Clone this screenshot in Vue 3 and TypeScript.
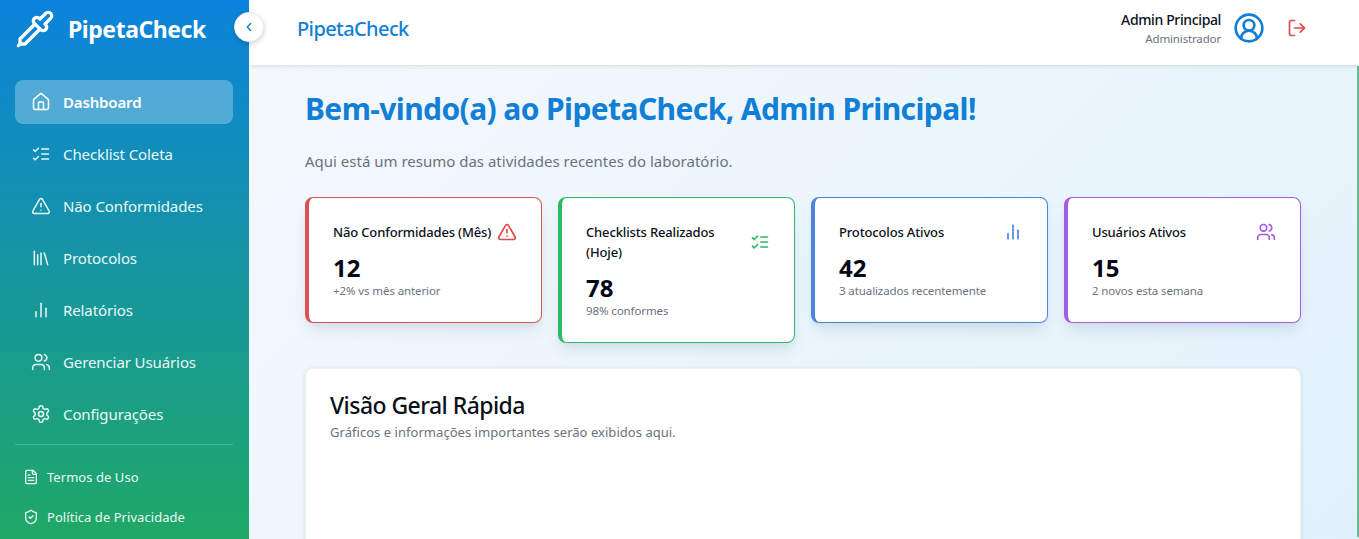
<template>
  <div class="layout">
    <aside class="sidebar">
      <div class="brand">
        <svg class="brand-icon" viewBox="0 0 24 24" fill="none" stroke="currentColor" stroke-width="2" stroke-linecap="round" stroke-linejoin="round">
          <path d="m2 22 1-1h3l9-9" />
          <path d="M3 21v-3l9-9" />
          <path d="m15 6 3.4-3.4a2.1 2.1 0 1 1 3 3L18 9l.4.4a2.1 2.1 0 1 1-3 3l-3.8-3.8a2.1 2.1 0 1 1 3-3l.4.4Z" />
        </svg>
        <span class="brand-name">PipetaCheck</span>
      </div>
      <button class="collapse" type="button" aria-label="Recolher">
        <svg viewBox="0 0 24 24" fill="none" stroke="currentColor" stroke-width="2.4" stroke-linecap="round" stroke-linejoin="round"><path d="m15 18-6-6 6-6" /></svg>
      </button>

      <nav class="nav">
        <a v-for="item in navItems" :key="item.label" class="nav-item" :class="{ active: item.active }">
          <svg class="nav-icon" viewBox="0 0 24 24" fill="none" stroke="currentColor" stroke-width="2" stroke-linecap="round" stroke-linejoin="round">
            <path v-for="d in icons[item.icon]" :key="d" :d="d" />
          </svg>
          <span>{{ item.label }}</span>
        </a>
      </nav>

      <div class="legal">
        <a v-for="item in legalItems" :key="item.label" class="legal-item">
          <svg class="legal-icon" viewBox="0 0 24 24" fill="none" stroke="currentColor" stroke-width="2" stroke-linecap="round" stroke-linejoin="round">
            <path v-for="d in icons[item.icon]" :key="d" :d="d" />
          </svg>
          <span>{{ item.label }}</span>
        </a>
      </div>
    </aside>

    <div class="content">
      <header class="topbar">
        <span class="topbar-title">PipetaCheck</span>
        <div class="user">
          <div class="user-text">
            <span class="user-name">Admin Principal</span>
            <span class="user-role">Administrador</span>
          </div>
          <svg class="user-icon" viewBox="0 0 24 24" fill="none" stroke="currentColor" stroke-width="2" stroke-linecap="round" stroke-linejoin="round">
            <path d="M18 20a6 6 0 0 0-12 0" />
            <circle cx="12" cy="10" r="4" />
            <circle cx="12" cy="12" r="10" />
          </svg>
          <svg class="logout-icon" viewBox="0 0 24 24" fill="none" stroke="currentColor" stroke-width="2" stroke-linecap="round" stroke-linejoin="round">
            <path d="M9 21H5a2 2 0 0 1-2-2V5a2 2 0 0 1 2-2h4" />
            <path d="m16 17 5-5-5-5" />
            <path d="M21 12H9" />
          </svg>
        </div>
      </header>

      <main class="main">
        <h1 class="welcome">Bem-vindo(a) ao PipetaCheck, Admin Principal!</h1>
        <p class="intro">Aqui está um resumo das atividades recentes do laboratório.</p>

        <section class="cards">
          <article v-for="card in cards" :key="card.title" class="card" :class="card.tone">
            <div class="card-head">
              <h2 class="card-title">{{ card.title }}</h2>
              <svg class="card-icon" viewBox="0 0 24 24" fill="none" stroke="currentColor" stroke-width="2" stroke-linecap="round" stroke-linejoin="round">
                <path v-for="d in icons[card.icon]" :key="d" :d="d" />
              </svg>
            </div>
            <div class="card-value">{{ card.value }}</div>
            <div class="card-note">{{ card.note }}</div>
          </article>
        </section>

        <section class="overview">
          <h2 class="overview-title">Visão Geral Rápida</h2>
          <p class="overview-text">Gráficos e informações importantes serão exibidos aqui.</p>
        </section>

        <div class="scroll-thumb"></div>
      </main>
    </div>
  </div>
</template>

<script setup lang="ts">
type IconName = 'home' | 'list' | 'alert' | 'library' | 'chart' | 'users' | 'gear' | 'file' | 'shield'

const icons: Record<IconName, string[]> = {
  home: [
    'M15 21v-8a1 1 0 0 0-1-1h-4a1 1 0 0 0-1 1v8',
    'M3 10a2 2 0 0 1 .709-1.528l7-5.999a2 2 0 0 1 2.582 0l7 5.999A2 2 0 0 1 21 10v9a2 2 0 0 1-2 2H5a2 2 0 0 1-2-2z'
  ],
  list: ['m3 17 2 2 4-4', 'm3 7 2 2 4-4', 'M13 6h8', 'M13 12h8', 'M13 18h8'],
  alert: [
    'm21.73 18-8-14a2 2 0 0 0-3.48 0l-8 14A2 2 0 0 0 4 21h16a2 2 0 0 0 1.73-3',
    'M12 9v4',
    'M12 17h.01'
  ],
  library: ['m16 6 4 14', 'M12 6v14', 'M8 8v12', 'M4 4v16'],
  chart: ['M18 20V10', 'M12 20V4', 'M6 20v-6'],
  users: [
    'M16 21v-2a4 4 0 0 0-4-4H6a4 4 0 0 0-4 4v2',
    'M9 3a4 4 0 1 0 0 8 4 4 0 0 0 0-8',
    'M22 21v-2a4 4 0 0 0-3-3.87',
    'M16 3.13a4 4 0 0 1 0 7.75'
  ],
  gear: [
    'M12.22 2h-.44a2 2 0 0 0-2 2v.18a2 2 0 0 1-1 1.73l-.43.25a2 2 0 0 1-2 0l-.15-.08a2 2 0 0 0-2.73.73l-.22.38a2 2 0 0 0 .73 2.73l.15.1a2 2 0 0 1 1 1.72v.51a2 2 0 0 1-1 1.74l-.15.09a2 2 0 0 0-.73 2.73l.22.38a2 2 0 0 0 2.73.73l.15-.08a2 2 0 0 1 2 0l.43.25a2 2 0 0 1 1 1.73V20a2 2 0 0 0 2 2h.44a2 2 0 0 0 2-2v-.18a2 2 0 0 1 1-1.73l.43-.25a2 2 0 0 1 2 0l.15.08a2 2 0 0 0 2.73-.73l.22-.39a2 2 0 0 0-.73-2.73l-.15-.08a2 2 0 0 1-1-1.74v-.5a2 2 0 0 1 1-1.74l.15-.09a2 2 0 0 0 .73-2.73l-.22-.38a2 2 0 0 0-2.73-.73l-.15.08a2 2 0 0 1-2 0l-.43-.25a2 2 0 0 1-1-1.73V4a2 2 0 0 0-2-2z',
    'M12 9a3 3 0 1 0 0 6 3 3 0 0 0 0-6'
  ],
  file: [
    'M15 2H6a2 2 0 0 0-2 2v16a2 2 0 0 0 2 2h12a2 2 0 0 0 2-2V7Z',
    'M14 2v4a2 2 0 0 0 2 2h4',
    'M10 9H8',
    'M16 13H8',
    'M16 17H8'
  ],
  shield: [
    'M20 13c0 5-3.5 7.5-7.66 8.95a1 1 0 0 1-.67-.01C7.5 20.5 4 18 4 13V6a1 1 0 0 1 1-1c2 0 4.5-1.2 6.24-2.72a1.17 1.17 0 0 1 1.52 0C14.51 3.81 17 5 19 5a1 1 0 0 1 1 1z',
    'm9 12 2 2 4-4'
  ]
}

interface NavItem {
  label: string
  icon: IconName
  active?: boolean
}

interface Card {
  title: string
  value: string
  note: string
  icon: IconName
  tone: 'red' | 'green' | 'blue' | 'purple'
}

const navItems: NavItem[] = [
  { label: 'Dashboard', icon: 'home', active: true },
  { label: 'Checklist Coleta', icon: 'list' },
  { label: 'Não Conformidades', icon: 'alert' },
  { label: 'Protocolos', icon: 'library' },
  { label: 'Relatórios', icon: 'chart' },
  { label: 'Gerenciar Usuários', icon: 'users' },
  { label: 'Configurações', icon: 'gear' }
]

const legalItems: NavItem[] = [
  { label: 'Termos de Uso', icon: 'file' },
  { label: 'Política de Privacidade', icon: 'shield' }
]

const cards: Card[] = [
  { title: 'Não Conformidades (Mês)', value: '12', note: '+2% vs mês anterior', icon: 'alert', tone: 'red' },
  { title: 'Checklists Realizados (Hoje)', value: '78', note: '98% conformes', icon: 'list', tone: 'green' },
  { title: 'Protocolos Ativos', value: '42', note: '3 atualizados recentemente', icon: 'chart', tone: 'blue' },
  { title: 'Usuários Ativos', value: '15', note: '2 novos esta semana', icon: 'users', tone: 'purple' }
]
</script>

<style>
html,
body {
  margin: 0;
  height: 100%;
  overflow: hidden;
}
</style>

<style scoped>
.layout {
  display: flex;
  width: 1359px;
  height: 539px;
  overflow: hidden;
  font-family: "Noto Sans", "Open Sans", sans-serif;
  color: #0b0f19;
}

.sidebar {
  position: relative;
  z-index: 3;
  flex: 0 0 249px;
  box-sizing: border-box;
  height: 539px;
  padding: 0 16px 0 15px;
  background: linear-gradient(180deg, #0c83dc 0%, #20a866 100%);
  color: #fff;
}

.brand {
  display: flex;
  align-items: center;
  gap: 13px;
  height: 58px;
}

.brand-icon {
  width: 40px;
  height: 40px;
  flex: none;
}

.brand-name {
  font-size: 23px;
  font-weight: 700;
  letter-spacing: -0.45px;
}

.collapse {
  position: absolute;
  top: 12px;
  right: -15px;
  display: flex;
  align-items: center;
  justify-content: center;
  width: 30px;
  height: 30px;
  padding: 0;
  border: 1px solid #e5edf4;
  border-radius: 50%;
  background: #fff;
  box-shadow: 0 2px 5px rgba(0, 0, 0, 0.18);
  color: #127fd6;
}

.collapse svg {
  width: 14px;
  height: 14px;
}

.nav {
  display: flex;
  flex-direction: column;
  gap: 8px;
  margin-top: 22px;
}

.nav-item {
  display: flex;
  align-items: center;
  gap: 12px;
  height: 44px;
  padding: 0 16px;
  border-radius: 8px;
  font-size: 15px;
  letter-spacing: -0.1px;
  color: #e9f8f6;
}

.nav-item.active {
  background: rgba(255, 255, 255, 0.28);
  color: #fff;
  font-weight: 600;
  letter-spacing: -0.15px;
}

.nav-icon {
  flex: none;
  width: 20px;
  height: 20px;
  stroke-width: 1.8;
}

.legal {
  margin-top: 8px;
  padding-top: 12px;
  border-top: 1px solid rgba(255, 255, 255, 0.2);
}

.legal-item {
  display: flex;
  align-items: center;
  gap: 8px;
  height: 40px;
  padding-left: 8px;
  font-size: 13px;
  letter-spacing: 0.05px;
  color: #e9f8f6;
}

.legal-icon {
  flex: none;
  width: 16px;
  height: 16px;
}

.content {
  flex: 1;
  min-width: 0;
  display: flex;
  flex-direction: column;
  height: 539px;
}

.topbar {
  position: relative;
  z-index: 2;
  flex: 0 0 65px;
  display: flex;
  align-items: center;
  justify-content: space-between;
  box-sizing: border-box;
  padding: 0 52px 9px 48px;
  background: #fff;
  box-shadow: 0 1px 4px rgba(0, 0, 0, 0.12);
}

.topbar-title {
  font-size: 20px;
  font-weight: 500;
  letter-spacing: -0.6px;
  color: #127fd6;
}

.user {
  display: flex;
  align-items: center;
}

.user-text {
  display: flex;
  flex-direction: column;
  align-items: flex-end;
}

.user-name {
  font-size: 14px;
  font-weight: 500;
  line-height: 20px;
  letter-spacing: -0.37px;
}

.user-role {
  margin-top: 1px;
  font-size: 11.5px;
  line-height: 16px;
  letter-spacing: -0.15px;
  color: #6b7280;
}

.user-icon {
  width: 32px;
  height: 32px;
  margin-left: 12px;
  color: #127fd6;
}

.logout-icon {
  width: 20px;
  height: 20px;
  margin-left: 22px;
  color: #dc4a4a;
}

.main {
  position: relative;
  flex: 1;
  min-height: 0;
  box-sizing: border-box;
  padding: 24px 58px 0 56px;
  background: linear-gradient(135deg, #f4f8fd 0%, #e9f5fc 60%, #e0f1fb 100%);
  overflow: hidden;
}

.scroll-thumb {
  position: absolute;
  top: 1px;
  right: 0;
  bottom: 2px;
  width: 2px;
  background: #66bb92;
}

.welcome {
  margin: 0;
  font-size: 30px;
  font-weight: 700;
  line-height: 40px;
  letter-spacing: -0.6px;
  color: #127fd6;
}

.intro {
  margin: 22px 0 0;
  font-size: 15px;
  line-height: 20px;
  color: #6b7280;
}

.cards {
  display: grid;
  grid-template-columns: repeat(4, 237px);
  gap: 16px;
  align-items: start;
  margin-top: 26px;
}

.card {
  box-sizing: border-box;
  padding: 24px 24px 23px;
  border: 1px solid;
  border-left-width: 4px;
  border-radius: 8px;
  background: #fff;
  box-shadow: 0 10px 15px -3px rgba(30, 60, 90, 0.1), 0 4px 6px -2px rgba(30, 60, 90, 0.05);
}

.card.red {
  border-color: #dc5252;
}

.card.green {
  border-color: #2fb966;
}

.card.blue {
  border-color: #4a84dc;
}

.card.purple {
  border-color: #a35ce6;
}

.card-head {
  display: flex;
  align-items: center;
  justify-content: space-between;
  gap: 4px;
}

.card-title {
  margin: 0;
  font-size: 13px;
  font-weight: 500;
  line-height: 20px;
  letter-spacing: -0.15px;
  color: #0b0f19;
}

.card-icon {
  flex: none;
  width: 20px;
  height: 20px;
}

.red .card-icon {
  color: #dc4a4a;
}

.green .card-icon {
  color: #2fb966;
}

.blue .card-icon {
  color: #4a84dc;
}

.purple .card-icon {
  color: #a35ce6;
}

.card-value {
  margin-top: 10px;
  font-size: 24px;
  font-weight: 700;
  line-height: 31px;
  color: #040814;
}

.card-note {
  font-size: 11.5px;
  line-height: 16px;
  letter-spacing: -0.1px;
  color: #6b7280;
}

.overview {
  box-sizing: border-box;
  height: 300px;
  margin-top: 25px;
  padding: 22px 24px;
  border: 1px solid #eef2f6;
  border-radius: 8px;
  background: #fff;
  box-shadow: 0 1px 4px rgba(30, 60, 90, 0.14);
}

.overview-title {
  margin: 0;
  font-size: 23px;
  font-weight: 500;
  line-height: 28px;
  letter-spacing: -0.55px;
  color: #0b0f19;
}

.overview-text {
  margin: 4px 0 0;
  font-size: 13px;
  line-height: 18px;
  letter-spacing: 0.04px;
  color: #6b7280;
}
</style>
